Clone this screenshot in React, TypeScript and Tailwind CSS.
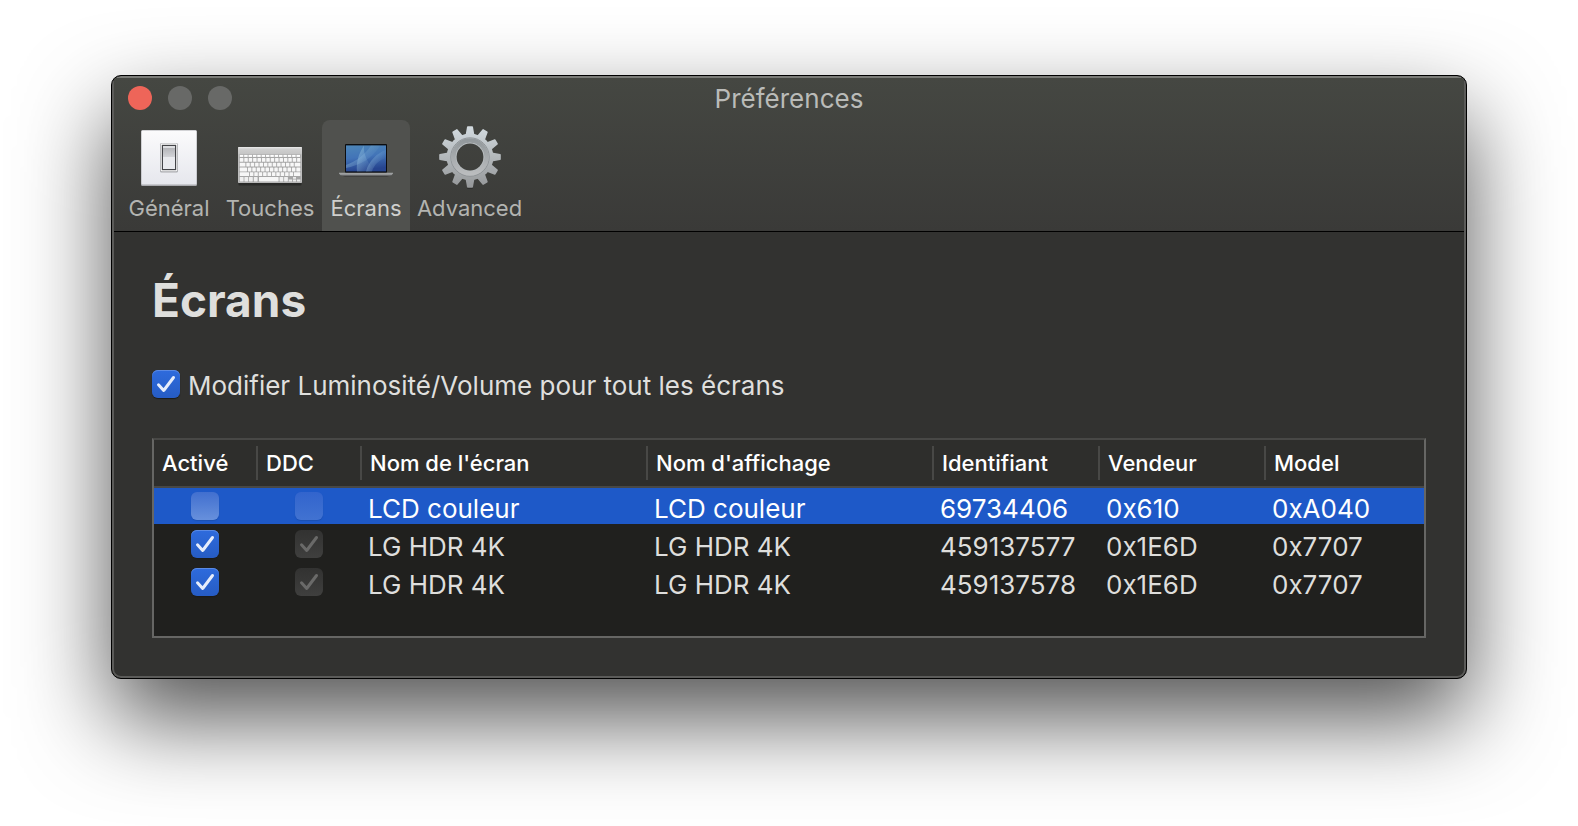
import { useState } from "react";
import type { ReactNode } from "react";

interface Display {
  id: string;
  enabled: boolean;
  ddc: boolean;
  name: string;
  friendlyName: string;
  vendor: string;
  model: string;
}

const initialDisplays: Display[] = [
  { id: "69734406", enabled: false, ddc: false, name: "LCD couleur", friendlyName: "LCD couleur", vendor: "0x610", model: "0xA040" },
  { id: "459137577", enabled: true, ddc: true, name: "LG HDR 4K", friendlyName: "LG HDR 4K", vendor: "0x1E6D", model: "0x7707" },
  { id: "459137578", enabled: true, ddc: true, name: "LG HDR 4K", friendlyName: "LG HDR 4K", vendor: "0x1E6D", model: "0x7707" },
];

const columns = [
  { label: "Activé", width: "w-[104px]" },
  { label: "DDC", width: "w-[104px]" },
  { label: "Nom de l'écran", width: "w-[286px]" },
  { label: "Nom d'affichage", width: "w-[286px]" },
  { label: "Identifiant", width: "w-[166px]" },
  { label: "Vendeur", width: "w-[166px]" },
  { label: "Model", width: "" },
];

function SwitchIcon() {
  return (
    <svg width="56" height="56" viewBox="0 0 56 56" aria-hidden="true">
      <defs>
        <linearGradient id="plate" x1="0" y1="0" x2="0" y2="1">
          <stop offset="0" stopColor="#fbfbfc" />
          <stop offset="1" stopColor="#e6e7ed" />
        </linearGradient>
        <linearGradient id="rocker" x1="0" y1="0" x2="0" y2="1">
          <stop offset="0" stopColor="#b4b5b9" />
          <stop offset="1" stopColor="#d2d3d7" />
        </linearGradient>
      </defs>
      <rect width="56" height="56" rx="1.5" fill="#a9aaae" />
      <rect x="0.5" y="0.5" width="55" height="54" rx="1" fill="url(#plate)" />
      <rect x="19" y="13" width="18" height="29.5" rx="1.5" fill="#a9aaae" />
      <rect x="19.8" y="13.6" width="16.4" height="27.6" rx="1" fill="#fff" />
      <rect x="20.8" y="14.8" width="14.4" height="25.4" fill="#434448" />
      <rect x="22" y="16" width="12" height="23" fill="#e9eaee" />
      <rect x="22" y="18" width="12" height="9" fill="url(#rocker)" />
      <rect x="22" y="16" width="12" height="2" fill="#dddee1" />
    </svg>
  );
}

function KeyboardIcon() {
  const rows = [
    { y: 10.9, lead: 3.6, count: 12 },
    { y: 15.7, lead: 5.6, count: 11 },
    { y: 20.5, lead: 7.2, count: 11 },
    { y: 25.2, lead: 9.2, count: 10 },
  ];
  return (
    <svg width="64" height="40" viewBox="0 0 64 40" aria-hidden="true">
      <defs>
        <linearGradient id="kbTop" x1="0" y1="0" x2="0" y2="1">
          <stop offset="0" stopColor="#d4d4d4" />
          <stop offset="1" stopColor="#c4c4c4" />
        </linearGradient>
      </defs>
      <rect x="0.5" y="2" width="63" height="36.5" rx="1" fill="#000" opacity="0.3" />
      <rect width="64" height="36" rx="0.8" fill="#bdbdbd" />
      <rect width="64" height="7.5" rx="0.8" fill="url(#kbTop)" />
      <rect x="0.8" y="0.3" width="62.4" height="0.9" fill="#ededed" />
      <rect x="1.2" y="7.4" width="61.6" height="27.8" fill="#a6a6a6" />
      {Array.from({ length: 14 }, (_, i) => (
        <rect key={i} x={1.8 + i * 4.36} y="7.9" width="3.5" height="2" fill="#fff" />
      ))}
      {rows.map((row) => {
        const end = 1.8 + row.lead + 0.9 + row.count * 4.4;
        return (
          <g key={row.y} fill="#f7f7f7">
            <rect x="1.8" y={row.y} width={row.lead} height="3.9" rx="0.4" />
            {Array.from({ length: row.count }, (_, i) => (
              <rect key={i} x={2.7 + row.lead + i * 4.4} y={row.y} width="3.5" height="3.9" rx="0.4" />
            ))}
            <rect x={end} y={row.y} width={62.3 - end} height="3.9" rx="0.4" />
          </g>
        );
      })}
      {[1.8, 6.4, 11, 15.8].map((x) => (
        <rect key={x} x={x} y="29.9" width="3.8" height="4.6" rx="0.4" fill="#f0f0f0" />
      ))}
      <rect x="21" y="29.9" width="19.6" height="4.6" rx="0.4" fill="#f6f6f6" />
      {[41.5, 46.1].map((x) => (
        <rect key={x} x={x} y="29.9" width="3.8" height="4.6" rx="0.4" fill="#f0f0f0" />
      ))}
      <path d="M50.7 32.4h3.4v2.1h-3.4zM55 29.9h3v1.9h-3zM55 32.4h3v2.1h-3zM58.9 32.4h3.4v2.1h-3.4z" fill="#ededed" />
    </svg>
  );
}

function LaptopIcon() {
  return (
    <svg width="56" height="36" viewBox="0 0 56 36" aria-hidden="true">
      <defs>
        <linearGradient id="screen" x1="0" y1="0" x2="0.2" y2="1">
          <stop offset="0" stopColor="#4d86b8" />
          <stop offset="0.5" stopColor="#4274b8" />
          <stop offset="1" stopColor="#26448f" />
        </linearGradient>
        <linearGradient id="base" x1="0" y1="0" x2="0" y2="1">
          <stop offset="0" stopColor="#b9bbbd" />
          <stop offset="0.5" stopColor="#87898b" />
          <stop offset="1" stopColor="#303030" />
        </linearGradient>
        <linearGradient id="glow" x1="0" y1="0" x2="1" y2="0.4">
          <stop offset="0" stopColor="#a9d6ea" stopOpacity="0.45" />
          <stop offset="1" stopColor="#a9d6ea" stopOpacity="0" />
        </linearGradient>
      </defs>
      <rect x="7" y="1" width="42" height="29" rx="1" fill="#0c0d10" />
      <rect x="8" y="2.4" width="40" height="26" fill="url(#screen)" />
      <path d="M8 22C18 18 27 12 33 2.4h9C35 15 22 22 8 25z" fill="url(#glow)" />
      <path d="M19 28.4C18 19 21 10 26 2.4c-1 9 4 18 12 26z" fill="url(#glow)" />
      <path d="M28 28.4C31 18 39 10 48 7v8C41 17 36 22 34 28.4z" fill="url(#glow)" />
      <path d="M1 30.2h54l-1.5 2.2c-3 .9-6 1.1-9 1.1h-33c-3 0-6-.2-9-1.1z" fill="url(#base)" />
      <path d="M1 30.2h54" stroke="#a5a7a8" strokeWidth="0.8" />
    </svg>
  );
}

function GearIcon() {
  return (
    <svg width="62" height="64" viewBox="0 0 62 64" aria-hidden="true">
      <defs>
        <linearGradient id="gear" x1="0" y1="0" x2="0" y2="62" gradientUnits="userSpaceOnUse">
          <stop offset="0" stopColor="#d3dbe0" />
          <stop offset="0.5" stopColor="#b3b8bb" />
          <stop offset="1" stopColor="#959799" />
        </linearGradient>
        <linearGradient id="hub" x1="0" y1="0" x2="0" y2="1">
          <stop offset="0" stopColor="#93999c" />
          <stop offset="1" stopColor="#babcbe" />
        </linearGradient>
        <mask id="hole">
          <rect width="62" height="64" fill="#fff" />
          <circle cx="31" cy="31" r="13.4" fill="#000" />
        </mask>
        <mask id="teeth">
          <g fill="#fff">
            <circle cx="31" cy="31" r="23.4" />
            {Array.from({ length: 12 }, (_, i) => (
              <path key={i} d="M26.6 9L28 .9q.1-.7.8-.7h4.4q.7 0 .8.7L35.4 9z" transform={`rotate(${i * 30} 31 31)`} />
            ))}
          </g>
        </mask>
      </defs>
      <g mask="url(#hole)">
        <path d="M27.5 54l.7 9h5.6l.7-9z" fill="#1c1c1c" opacity="0.4" />
        <rect width="62" height="62" fill="url(#gear)" mask="url(#teeth)" />
        <circle cx="31" cy="31" r="19.2" fill="none" stroke="#8b9093" strokeWidth="0.9" />
        <circle cx="31" cy="31" r="16.4" fill="none" stroke="url(#hub)" strokeWidth="4.6" />
        <circle cx="31" cy="31" r="14" fill="none" stroke="#b9bec0" strokeWidth="1" />
      </g>
    </svg>
  );
}

interface CheckboxProps {
  id?: string;
  label?: string;
  checked: boolean;
  disabled?: boolean;
  selected?: boolean;
  onChange?: (checked: boolean) => void;
}

function Checkbox({ id, label, checked, disabled, selected, onChange }: CheckboxProps) {
  let look = "bg-linear-to-b from-[#4a4a48] to-[#6a6a68]";
  if (selected && !checked) {
    look = disabled
      ? "bg-linear-to-b from-[#3264cd] to-[#4172d1] shadow-[0_1px_1px_#1b4fb0]"
      : "bg-linear-to-b from-[#416fcf] to-[#6790dc] shadow-[0_1px_1px_#1b4fb0]";
  } else if (disabled) {
    look = "bg-linear-to-b from-[#323231] to-[#3f3f3e]";
  } else if (checked) {
    look = "bg-linear-to-b from-[#2e6bdd] to-[#265cc4] shadow-[inset_0_1px_0_#5b8ae4,0_1px_1px_#1a1a1a]";
  }

  return (
    <span className="inline-grid size-7 shrink-0 align-middle">
      <input
        id={id}
        type="checkbox"
        aria-label={label}
        checked={checked}
        disabled={disabled}
        onChange={(e) => onChange?.(e.target.checked)}
        className={`col-start-1 row-start-1 size-7 appearance-none rounded-md ${look}`}
      />
      {checked && (
        <svg viewBox="0 0 28 28" className="pointer-events-none col-start-1 row-start-1 size-7" aria-hidden="true">
          <path
            d="M6.5 14.8L11.7 20.5L21.5 7.5"
            fill="none"
            stroke={disabled ? "#6a6a69" : "#e6edfb"}
            strokeWidth="3"
            strokeLinecap="round"
            strokeLinejoin="round"
          />
        </svg>
      )}
    </span>
  );
}

const tabs: { id: string; label: string; width: string; icon: ReactNode }[] = [
  { id: "general", label: "Général", width: "w-[98px]", icon: <SwitchIcon /> },
  { id: "keys", label: "Touches", width: "w-[104px]", icon: <div className="pt-[18px]"><KeyboardIcon /></div> },
  { id: "displays", label: "Écrans", width: "w-[88px]", icon: <div className="pt-[6px]"><LaptopIcon /></div> },
  { id: "advanced", label: "Advanced", width: "w-[119px]", icon: <GearIcon /> },
];

export default function App() {
  const [activeTab, setActiveTab] = useState("displays");
  const [allScreens, setAllScreens] = useState(true);
  const [displays, setDisplays] = useState(initialDisplays);
  const [selectedId, setSelectedId] = useState("69734406");

  const setEnabled = (id: string, enabled: boolean) => {
    setDisplays((prev) => prev.map((d) => (d.id === id ? { ...d, enabled } : d)));
  };

  return (
    <div className="min-h-screen bg-white px-[111px] pt-[75px] pb-36 font-['Inter','Liberation_Sans',sans-serif]">
      <div className="overflow-hidden rounded-[10px] border border-black bg-[#323230] shadow-[0_40px_90px_rgba(0,0,0,0.68)]">
        <div className="rounded-[9px] border-2 border-[#5b5b59] border-t-[#7b7c78]">
          <header className="border-b border-black bg-linear-to-b from-[#454742] to-[#3a3a38]">
            <div className="grid h-[42px] grid-cols-[1fr_auto_1fr] items-center px-[14px]">
              <div className="flex gap-4 pb-[2px]">
                <button type="button" aria-label="Fermer" className="size-6 rounded-full bg-[#ee6559]" />
                <button type="button" aria-label="Réduire" className="size-6 rounded-full bg-[#686967]" />
                <button type="button" aria-label="Agrandir" className="size-6 rounded-full bg-[#686967]" />
              </div>
              <h1 className="text-[26px] leading-8 text-[#babbb8]">Préférences</h1>
            </div>
            <nav className="flex px-[6px]">
              {tabs.map((tab) => (
                <button
                  key={tab.id}
                  type="button"
                  onClick={() => setActiveTab(tab.id)}
                  className={`flex h-[111px] flex-col items-center rounded-t-lg pt-1 ${tab.width} ${
                    activeTab === tab.id ? "bg-[#50514e] text-[#cfcfcd]" : "text-[#b3b4b1]"
                  }`}
                >
                  <span className="flex h-[68px] items-center justify-center">{tab.icon}</span>
                  <span className="text-[22px] leading-8">{tab.label}</span>
                </button>
              ))}
            </nav>
          </header>

          <main className="px-[38px] pt-9 pb-[38px]">
            <h2 className="text-[46px] leading-[64px] font-bold text-[#dfdfdd]">Écrans</h2>

            <div className="mt-[38px] flex gap-2">
              <Checkbox id="all-screens" checked={allScreens} onChange={setAllScreens} />
              <label htmlFor="all-screens" className="text-[26px] leading-8 text-[#dfdfdd]">
                Modifier Luminosité/Volume pour tout les écrans
              </label>
            </div>

            <div className="mt-9 min-h-[200px] border-2 border-[#666664] border-t-[#484846] bg-[#20201e]">
              <table className="w-full table-fixed border-separate border-spacing-0 text-left">
                <thead>
                  <tr>
                    {columns.map((col, idx) => (
                      <th key={col.label} scope="col" className={`h-12 border-b-2 border-[#484846] bg-[#2e2e2c] p-0 ${col.width}`}>
                        <div
                          className={`flex h-[34px] items-center pl-2 text-[22px] font-medium whitespace-nowrap text-white ${
                            idx < columns.length - 1 ? "border-r-2 border-[#484846]" : ""
                          }`}
                        >
                          {col.label}
                        </div>
                      </th>
                    ))}
                  </tr>
                </thead>
                <tbody className="text-[26px] leading-[30px]">
                  {displays.map((display) => {
                    const selected = display.id === selectedId;
                    const cell = "h-[38px] border-b-2 border-[#20201e]";
                    return (
                      <tr
                        key={display.id}
                        onClick={() => setSelectedId(display.id)}
                        className={selected ? "bg-[#1e59c8] text-white" : "text-[#dededc]"}
                      >
                        <td className={`${cell} py-0 pr-[2px] pl-0 text-center leading-none`}>
                          <Checkbox
                            label={`Activer ${display.name}`}
                            checked={display.enabled}
                            selected={selected}
                            onChange={(checked) => setEnabled(display.id, checked)}
                          />
                        </td>
                        <td className={`${cell} py-0 pr-[2px] pl-0 text-center leading-none`}>
                          <Checkbox label={`DDC ${display.name}`} checked={display.ddc} selected={selected} disabled />
                        </td>
                        {[display.name, display.friendlyName, display.id, display.vendor, display.model].map((value, idx) => (
                          <td key={idx} className={`${cell} pt-[6px] pr-0 pb-0 pl-[6px] whitespace-nowrap`}>
                            {value}
                          </td>
                        ))}
                      </tr>
                    );
                  })}
                </tbody>
              </table>
            </div>
          </main>
        </div>
      </div>
    </div>
  );
}
